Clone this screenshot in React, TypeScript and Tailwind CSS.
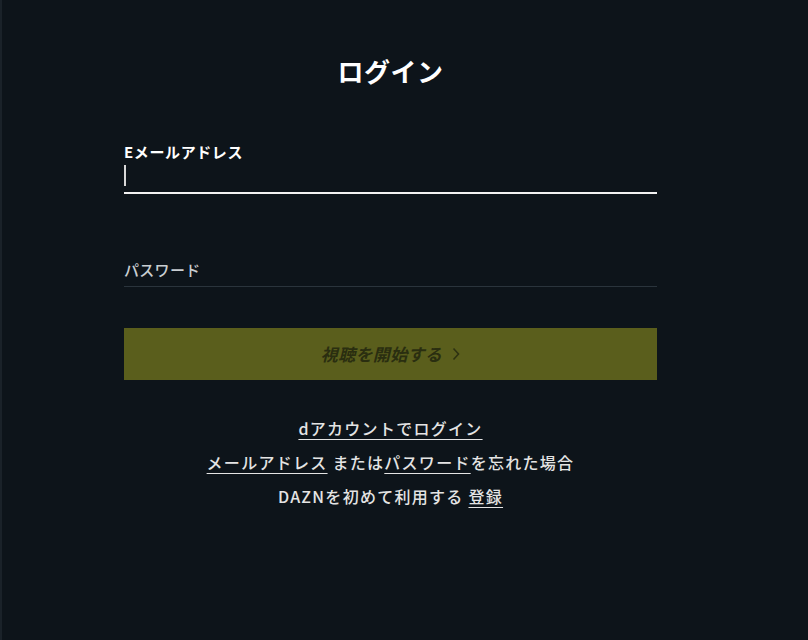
export default function App() {
  return (
    <div
      className="min-h-screen w-full bg-[#0d141a] border-l-2 border-[#1a2229] text-white"
      style={{ fontFamily: '"Noto Sans CJK JP", "Noto Sans", sans-serif' }}
    >
      <div className="ml-[122px] w-[533px] pt-[53px] flex flex-col">
        {/* タイトル */}
        <h1 className="text-center text-[26px] leading-[36px] font-bold tracking-[0.02em]">ログイン</h1>

        {/* Eメールアドレス */}
        <div className="mt-[53px]">
          <label className="block text-[15px] leading-[20px] font-bold tracking-[0.04em]">Eメールアドレス</label>
          <div className="h-[32px] border-b-2 border-[#f2f2f2] flex items-start pt-[3px]">
            <span className="block w-[1.5px] h-[21px] bg-[#d8d8d8]" />
          </div>
        </div>

        {/* パスワード */}
        <div className="mt-[66px]">
          <label className="block text-[15px] leading-[20px] font-medium text-[#c9ced2] tracking-[0.02em]">パスワード</label>
          <div className="mt-[6px] border-b border-[#2a343c]" />
        </div>

        {/* ボタン */}
        <button className="mt-[41px] h-[52px] w-full bg-[#5a5e1c] flex items-center justify-center gap-[10px] text-[#2a2e10] text-[17px] font-bold italic tracking-[0.02em]">
          視聴を開始する
          <svg width="8" height="14" viewBox="0 0 8 14" fill="none" stroke="#2e3212" strokeWidth="1.6">
            <path d="M1.5 1.5 L6.5 7 L1.5 12.5" />
          </svg>
        </button>

        {/* リンク */}
        <div className="mt-[31px] flex flex-col items-center text-[16px] leading-[34px] font-medium text-[#e4e4e4] tracking-[0.08em]">
          <a className="underline underline-offset-4">dアカウントでログイン</a>
          <p>
            <a className="underline underline-offset-4">メールアドレス</a> または
            <a className="underline underline-offset-4">パスワード</a>を忘れた場合
          </p>
          <p>
            DAZNを初めて利用する <a className="underline underline-offset-4">登録</a>
          </p>
        </div>
      </div>
    </div>
  );
}
